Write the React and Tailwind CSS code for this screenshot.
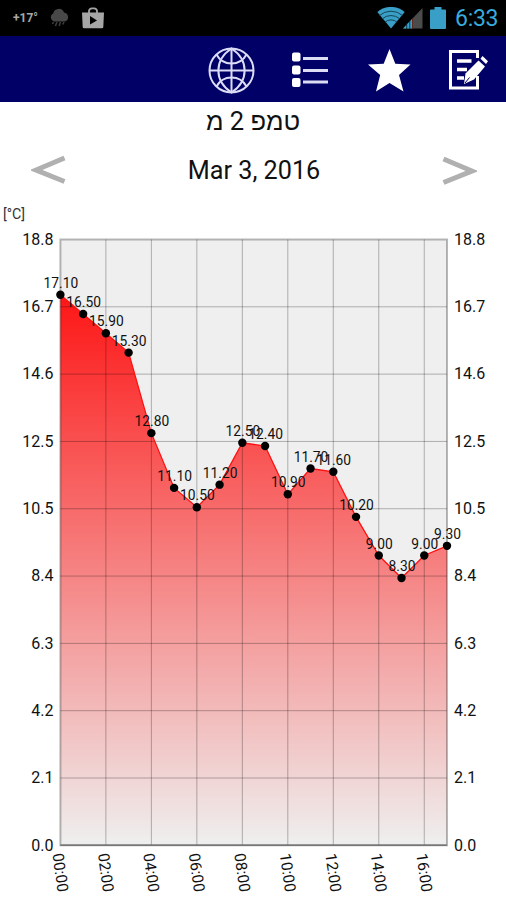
// src/App.jsx
import React from 'react';

const readings = [
  17.1, 16.5, 15.9, 15.3, 12.8, 11.1, 10.5, 11.2, 12.5,
  12.4, 10.9, 11.7, 11.6, 10.2, 9.0, 8.3, 9.0, 9.3,
];
const yLabels = ['18.8', '16.7', '14.6', '12.5', '10.5', '8.4', '6.3', '4.2', '2.1', '0.0'];
const xLabels = ['00:00', '02:00', '04:00', '06:00', '08:00', '10:00', '12:00', '14:00', '16:00'];

// Plot area inside the 506x700 drawing
const LEFT = 60.4;
const RIGHT = 447;
const TOP = 39.5;
const BOTTOM = 645.3;
const STEP = (RIGHT - LEFT) / (readings.length - 1);

const px = (i) => LEFT + i * STEP;
const py = (value) => BOTTOM - value * 32.2;

const StatusBar = () => (
  <div className="h-9 bg-black flex items-center justify-between pl-[13px] pr-2">
    <div className="flex items-center">
      <span className="w-[26px] text-[12px] leading-none font-bold text-[#a8a8a8]">+17°</span>
      <svg className="ml-[10px]" width="21" height="20" viewBox="0 0 21 20" fill="#484848">
        <path d="M5 13.5a4.300 4.300 0 0 1-.8-8A5.600 5.600 0 0 1 15 4.600 4.600 4.600 0 0 1 16 13.500z" />
        <path d="M4.5 14l-1 2M8 14l-1.6 4M11.5 14l-1.3 4M15 14l-1.3 2.5" stroke="#3c3c3c" strokeWidth="1.600" />
      </svg>
      <svg className="ml-3" width="22" height="22" viewBox="0 0 22 22">
        <path d="M7 6V4a3 3 0 0 1 3-2.7h2A3 3 0 0 1 15 4v2" fill="none" stroke="#a6a6a6" strokeWidth="1.8" />
        <path d="M0 5.5h22L21.3 20a1.3 1.3 0 0 1-1.3 1.3H2A1.3 1.3 0 0 1 .7 20z" fill="#a6a6a6" />
        <path d="M8 9l7 4.4L8 17.5z" fill="#000" />
      </svg>
    </div>
    <div className="flex items-center">
      <svg width="28" height="22" viewBox="0 0 28 22">
        <path d="M14 21.5L.3 5a21 21 0 0 1 27.4 0z" fill="#3a9fc6" />
        <path d="M2.5 8.5a17.5 17.5 0 0 1 23 0M5.2 11.8a13.5 13.5 0 0 1 17.6 0M8 15.1a9.3 9.3 0 0 1 12 0" fill="none" stroke="#144458" strokeWidth="1" />
      </svg>
      <svg className="-ml-[3px]" width="21" height="22" viewBox="0 0 21 22">
        <path d="M20.5 1v20.5H1z" fill="#4b4b4b" />
        <path d="M10 12v9.5H1z" fill="#3a9fc6" />
        <path d="M4.7 16v6M7.8 13v9" stroke="#06202b" strokeWidth=".8" />
        <path d="M10.5 11.5v10" stroke="#5d2b22" strokeWidth="1" />
      </svg>
      <svg className="ml-[7px]" width="16" height="22" viewBox="0 0 16 23" fill="#3a9fc6" preserveAspectRatio="none">
        <path d="M4.5 0h7v2.5H15a1 1 0 0 1 1 1V22a1 1 0 0 1-1 1H1a1 1 0 0 1-1-1V3.5a1 1 0 0 1 1-1h3.5z" />
      </svg>
      <span className="ml-[9px] w-[43px] pt-px text-[23px] leading-none tracking-[-0.3px] text-[#38abdc]">6:33</span>
    </div>
  </div>
);

const ActionBar = () => (
  <div className="h-[66px] pt-0.5 bg-[#000066] flex items-center justify-end pr-[18px]">
    <svg className="mr-[36px]" width="47" height="47" viewBox="0 0 47 47" fill="none" stroke="#dcdcf6" strokeWidth="2">
      <circle cx="23.500" cy="23.500" r="22" />
      <path d="M23.500 1.500v44M1.500 23.500h44" />
      <path d="M23.500 1.500C6 13 6 34 23.500 45.500C41 34 41 13 23.500 1.500z" />
      <path d="M8.500 7.500C15 19.500 32 19.500 38.500 7.500M8.500 39.500C15 27.500 32 27.500 38.500 39.500" />
    </svg>
    <svg className="mr-[39px]" width="38" height="38" viewBox="0 0 38 38" fill="#fff">
      <rect x="1" y="1.500" width="8.500" height="9" rx="2" />
      <rect x="1" y="14.500" width="8.500" height="9" rx="2" />
      <rect x="1" y="27" width="8.500" height="9" rx="2" />
      <path d="M12 7.500h25M12 19.500h25M12 31h25" stroke="#dcdcf5" strokeWidth="3" />
    </svg>
    <svg className="mr-[37px]" width="43" height="43" viewBox="0 0 43 43" fill="#fff">
      <path d="M21.500 0l5.800 14.700 15.200.8-11.500 10.500 4.500 16.500-14-8.500-13.500 8.500 4.200-16.500L0 15.500l15.700-.8z" />
    </svg>
    <svg width="40" height="40" viewBox="0 0 40 40" fill="none" stroke="#fff">
      <path d="M29.500 26v12H2.500V1.500h27V8" strokeWidth="3" />
      <path d="M9 11h14.500M9 19.500h10M9 28h7" strokeWidth="3.500" />
      <path d="M16 34l1.500-10.500L30.500 10.500l6.500 6L26 29.500z" fill="#fff" stroke="none" />
      <path d="M31.500 9.500l6.500 6" stroke="#000066" strokeWidth="1" />
      <path d="M32.500 8.800l2-2.800 5.500 5.300-2 2.700z" fill="#fff" stroke="none" />
      <path d="M17 33l4.500-5.500" stroke="#000066" strokeWidth="1" />
    </svg>
  </div>
);

const DayPicker = () => (
  <div className="mt-1 h-[60px] flex items-center justify-between pl-[31px] pr-[29px]">
    <svg width="35" height="30" viewBox="0 0 35 30" fill="none" stroke="#b0b0b0" strokeWidth="5">
      <path d="M33.500 3L5 15l28.500 11.500" />
    </svg>
    <span className="pt-px text-[25.2px] leading-none">Mar 3, 2016</span>
    <svg width="35" height="30" viewBox="0 0 35 30" fill="none" stroke="#b0b0b0" strokeWidth="5">
      <path d="M1.500 4L30 16 1.500 27.500" />
    </svg>
  </div>
);

const TemperatureChart = () => {
  const line = readings.map((value, i) => `${px(i)},${py(value)}`).join(' ');
  const rowGap = (BOTTOM - TOP) / (yLabels.length - 1);

  return (
    <svg className="block" width="506" height="700" viewBox="0 0 506 700" fill="#111">
      <defs>
        <linearGradient id="heat" gradientUnits="userSpaceOnUse" x1="0" y1={TOP} x2="0" y2={BOTTOM}>
          <stop offset="0" stopColor="#ff0000" />
          <stop offset="1" stopColor="#ff0000" stopOpacity="0" />
        </linearGradient>
      </defs>
      <text x="3" y="19" fontSize="14" fill="#333" textLength="22" lengthAdjust="spacingAndGlyphs">[°C]</text>
      <rect x={LEFT} y={TOP} width={RIGHT - LEFT} height={BOTTOM - TOP} fill="#efefef" />
      <polygon points={`${LEFT},${BOTTOM} ${line} ${RIGHT},${BOTTOM}`} fill="url(#heat)" />

      {yLabels.map((label, i) => (
        <g key={label} fontSize="16">
          {i > 0 && <path d={`M${LEFT} ${TOP + i * rowGap}H${RIGHT}`} stroke="#000" strokeOpacity="0.28" />}
          <text x="53.500" y={TOP + i * rowGap + 5.300} textAnchor="end">{label}</text>
          <text x="454" y={TOP + i * rowGap + 5.300}>{label}</text>
        </g>
      ))}
      {xLabels.map((label, i) => (
        <g key={label} fontSize="15.500">
          {i > 0 && <path d={`M${px(i * 2)} ${TOP}V${BOTTOM}`} stroke="#000" strokeOpacity="0.28" />}
          <text transform={`translate(${px(i * 2) - 8} 654) rotate(82)`} textLength="39">{label}</text>
        </g>
      ))}
      <rect x={LEFT} y={TOP} width={RIGHT - LEFT} height={BOTTOM - TOP} fill="none" stroke="#000" strokeOpacity="0.280" strokeWidth="2" />
      <path d={`M${LEFT} ${BOTTOM}H${RIGHT}`} stroke="#777" strokeWidth="1.500" />

      <polyline points={line} fill="none" stroke="#ff1010" strokeWidth="1.300" />
      {readings.map((value, i) => (
        <g key={i}>
          <circle cx={px(i)} cy={py(value)} r="4.200" fill="#000" />
          <text x={px(i) + 0.500} y={py(value) - 7} fontSize="13.800" textAnchor="middle">{value.toFixed(2)}</text>
        </g>
      ))}
    </svg>
  );
};

export default function App() {
  return (
    <div className="w-[506px] h-[900px] overflow-hidden bg-white text-[#111] font-[Roboto,'Liberation_Sans',sans-serif]">
      <StatusBar />
      <ActionBar />
      <h1 dir="rtl" className="h-[34px] pt-[7px] text-center text-[25.5px] leading-none">טמפ 2 מ</h1>
      <DayPicker />
      <TemperatureChart />
    </div>
  );
}
